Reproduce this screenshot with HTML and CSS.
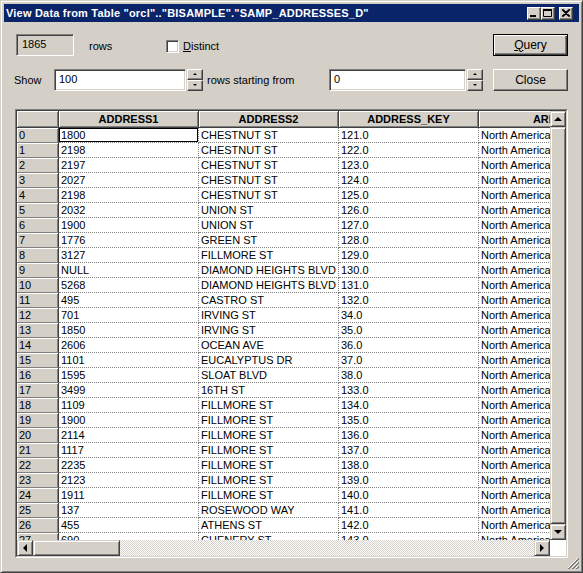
FILE: index.html
```html
<!DOCTYPE html>
<html lang="en">
<head>
    <meta charset="UTF-8">
    <title>View Data from Table</title>
    <link rel="stylesheet" href="styles.css">
</head>
<body>
<div class="window">
    <div class="titlebar">
        <span class="title">View Data from Table "orcl".."BISAMPLE"."SAMP_ADDRESSES_D"</span>
        <div class="caption">
            <span class="cap-btn"><svg width="12" height="11" viewBox="0 0 12 11"><rect x="2" y="7" width="6" height="2" fill="#000"/></svg></span>
            <span class="cap-btn"><svg width="12" height="11" viewBox="0 0 12 11"><path d="M1.5 1.5h8v7h-8z" fill="none" stroke="#000"/><rect x="1" y="1" width="9" height="2" fill="#000"/></svg></span>
            <span class="cap-btn close"><svg width="12" height="11" viewBox="0 0 12 11"><path d="M2 1.5l7 7M3 1.5l7 7M9 1.5l-7 7M10 1.5l-7 7" stroke="#000" stroke-width="1.1"/></svg></span>
        </div>
    </div>

    <div class="controls">
        <div class="ctrl-row">
            <div class="field readonly count">1865</div>
            <span class="lbl rows-lbl">rows</span>
            <label class="check"><span class="checkbox"></span><span><u>D</u>istinct</span></label>
            <button class="btn default"><u>Q</u>uery</button>
        </div>
        <div class="ctrl-row">
            <span class="lbl show-lbl">Show</span>
            <div class="field show-field">100</div>
            <div class="spin-btns"><span class="spin up"></span><span class="spin down"></span></div>
            <span class="lbl from-lbl">rows starting from</span>
            <div class="field start-field">0</div>
            <div class="spin-btns"><span class="spin up"></span><span class="spin down"></span></div>
            <button class="btn">Close</button>
        </div>
    </div>

    <div class="grid-panel">
        <div class="grid-inner">
            <div class="viewport">
                <table class="data">
                    <colgroup><col class="c-idx"><col class="c-data"><col class="c-data"><col class="c-data"><col class="c-data"></colgroup>
                    <thead>
                        <tr><th></th><th>ADDRESS1</th><th>ADDRESS2</th><th>ADDRESS_KEY</th><th>AREA</th></tr>
                    </thead>
                    <tbody>
                        <tr><th>0</th><td class="focus">1800</td><td>CHESTNUT ST</td><td>121.0</td><td>North America</td></tr>
                        <tr><th>1</th><td>2198</td><td>CHESTNUT ST</td><td>122.0</td><td>North America</td></tr>
                        <tr><th>2</th><td>2197</td><td>CHESTNUT ST</td><td>123.0</td><td>North America</td></tr>
                        <tr><th>3</th><td>2027</td><td>CHESTNUT ST</td><td>124.0</td><td>North America</td></tr>
                        <tr><th>4</th><td>2198</td><td>CHESTNUT ST</td><td>125.0</td><td>North America</td></tr>
                        <tr><th>5</th><td>2032</td><td>UNION ST</td><td>126.0</td><td>North America</td></tr>
                        <tr><th>6</th><td>1900</td><td>UNION ST</td><td>127.0</td><td>North America</td></tr>
                        <tr><th>7</th><td>1776</td><td>GREEN ST</td><td>128.0</td><td>North America</td></tr>
                        <tr><th>8</th><td>3127</td><td>FILLMORE ST</td><td>129.0</td><td>North America</td></tr>
                        <tr><th>9</th><td>NULL</td><td>DIAMOND HEIGHTS BLVD</td><td>130.0</td><td>North America</td></tr>
                        <tr><th>10</th><td>5268</td><td>DIAMOND HEIGHTS BLVD</td><td>131.0</td><td>North America</td></tr>
                        <tr><th>11</th><td>495</td><td>CASTRO ST</td><td>132.0</td><td>North America</td></tr>
                        <tr><th>12</th><td>701</td><td>IRVING ST</td><td>34.0</td><td>North America</td></tr>
                        <tr><th>13</th><td>1850</td><td>IRVING ST</td><td>35.0</td><td>North America</td></tr>
                        <tr><th>14</th><td>2606</td><td>OCEAN AVE</td><td>36.0</td><td>North America</td></tr>
                        <tr><th>15</th><td>1101</td><td>EUCALYPTUS DR</td><td>37.0</td><td>North America</td></tr>
                        <tr><th>16</th><td>1595</td><td>SLOAT BLVD</td><td>38.0</td><td>North America</td></tr>
                        <tr><th>17</th><td>3499</td><td>16TH ST</td><td>133.0</td><td>North America</td></tr>
                        <tr><th>18</th><td>1109</td><td>FILLMORE ST</td><td>134.0</td><td>North America</td></tr>
                        <tr><th>19</th><td>1900</td><td>FILLMORE ST</td><td>135.0</td><td>North America</td></tr>
                        <tr><th>20</th><td>2114</td><td>FILLMORE ST</td><td>136.0</td><td>North America</td></tr>
                        <tr><th>21</th><td>1117</td><td>FILLMORE ST</td><td>137.0</td><td>North America</td></tr>
                        <tr><th>22</th><td>2235</td><td>FILLMORE ST</td><td>138.0</td><td>North America</td></tr>
                        <tr><th>23</th><td>2123</td><td>FILLMORE ST</td><td>139.0</td><td>North America</td></tr>
                        <tr><th>24</th><td>1911</td><td>FILLMORE ST</td><td>140.0</td><td>North America</td></tr>
                        <tr><th>25</th><td>137</td><td>ROSEWOOD WAY</td><td>141.0</td><td>North America</td></tr>
                        <tr><th>26</th><td>455</td><td>ATHENS ST</td><td>142.0</td><td>North America</td></tr>
                        <tr><th>27</th><td>690</td><td>CHENERY ST</td><td>143.0</td><td>North America</td></tr>
                    </tbody>
                </table>
            </div>
            <div class="vscroll">
                <span class="sb-btn"><span class="arrow arrow-up"></span></span>
                <span class="track"><span class="thumb v-thumb"></span></span>
                <span class="sb-btn"><span class="arrow arrow-down"></span></span>
            </div>
            <div class="hscroll">
                <span class="sb-btn"><span class="arrow arrow-left"></span></span>
                <span class="track"><span class="thumb h-thumb"></span></span>
                <span class="sb-btn"><span class="arrow arrow-right"></span></span>
            </div>
            <div class="corner"></div>
        </div>
    </div>

    <svg class="grip" width="12" height="12" viewBox="0 0 12 12">
        <path d="M11 1L1 11M11 5L5 11M11 9L9 11" stroke="#fff"/>
        <path d="M12 1L1 12M12 2L2 12M12 5L5 12M12 6L6 12M12 9L9 12M12 10L10 12" stroke="#808080"/>
    </svg>
</div>
</body>
</html>
```

FILE: styles.css
```css
body{
    margin: 0;
    font-family: "Liberation Sans", Arial, sans-serif;
    font-size: 11px;
    color: #000;
}
.window{
    position: relative;
    box-sizing: border-box;
    width: 583px;
    height: 573px;
    padding: 3px;
    background-color: #d4d0c8;
    border: 1px solid;
    border-color: #d4d0c8 #404040 #404040 #d4d0c8;
    box-shadow: inset 1px 1px #fff, inset -1px -1px #808080;
}
.titlebar{
    display: flex;
    align-items: center;
    height: 18px;
    padding-left: 2px;
    background-color: #0a246a;
    color: #fff;
}
.title{
    font-weight: bold;
    font-size: 11px;
    letter-spacing: 0.2px;
    white-space: nowrap;
}
.caption{
    display: flex;
    margin-left: auto;
    padding-right: 6px;
}
.cap-btn{
    display: flex;
    align-items: center;
    justify-content: center;
    box-sizing: border-box;
    width: 14px;
    height: 13px;
    background-color: #d4d0c8;
    border: 1px solid;
    border-color: #fff #404040 #404040 #fff;
    box-shadow: inset -1px -1px #808080;
}
.cap-btn.close{
    margin-left: 4px;
}

/* top controls */
.controls{
    padding-top: 12px;
}
.ctrl-row{
    display: flex;
    align-items: center;
    height: 22px;
}
.ctrl-row + .ctrl-row{
    margin-top: 13px;
}
.field{
    box-sizing: border-box;
    height: 22px;
    padding: 0 0 2px 4px;
    display: flex;
    align-items: center;
    background-color: #fff;
    border: 1px solid;
    border-color: #808080 #fff #fff #808080;
    box-shadow: inset 1px 1px #404040, inset -1px -1px #d4d0c8;
}
.field.readonly{
    background-color: #d4d0c8;
}
.count{
    width: 58px;
    margin-left: 12px;
    padding-left: 5px;
}
.rows-lbl{
    width: 77px;
    margin-left: 15px;
    padding-top: 2px;
}
.check{
    display: flex;
    align-items: center;
    gap: 4px;
    padding-top: 2px;
}
.checkbox{
    box-sizing: border-box;
    width: 13px;
    height: 13px;
    background-color: #fff;
    border: 1px solid;
    border-color: #808080 #fff #fff #808080;
    box-shadow: inset 1px 1px #404040, inset -1px -1px #d4d0c8;
}
.show-lbl{
    width: 40px;
    margin-left: 10px;
}
.show-field{
    width: 132px;
}
.from-lbl{
    width: 122px;
    margin-left: 4px;
}
.start-field{
    width: 137px;
}
.spin-btns{
    display: flex;
    flex-direction: column;
    margin-left: 1px;
    height: 22px;
}
.spin{
    position: relative;
    box-sizing: border-box;
    width: 16px;
    height: 11px;
    border: 1px solid;
    border-color: #fff #404040 #404040 #fff;
    box-shadow: inset -1px -1px #808080;
    background-color: #d4d0c8;
}
.spin::after{
    content: '';
    position: absolute;
    left: 5px;
    top: 3px;
    border-left: 2px solid transparent;
    border-right: 2px solid transparent;
}
.spin.up::after{
    border-bottom: 2px solid #000;
}
.spin.down::after{
    border-top: 2px solid #000;
}
.btn{
    box-sizing: border-box;
    width: 75px;
    height: 22px;
    margin-left: auto;
    margin-right: 11px;
    padding: 0 0 1px;
    font: inherit;
    font-size: 12px;
    color: #000;
    background-color: #d4d0c8;
    border: 1px solid;
    border-color: #fff #404040 #404040 #fff;
    box-shadow: inset -1px -1px #808080;
}
.btn.default{
    border-color: #000;
    box-shadow: inset 1px 1px #fff, inset -1px -1px #404040, inset -2px -2px #808080;
}

/* data grid */
.grid-panel{
    box-sizing: border-box;
    width: 553px;
    height: 449px;
    margin: 18px 0 0 11px;
    border: 1px solid;
    border-color: #808080 #fff #fff #808080;
}
.grid-inner{
    display: grid;
    grid-template-columns: 533px 16px;
    grid-template-rows: 429px 16px;
    border: 1px solid;
    border-color: #404040 #d4d0c8 #d4d0c8 #404040;
}
.viewport{
    overflow: hidden;
    background-color: #fff;
}
.data{
    table-layout: fixed;
    width: 602px;
    border-collapse: separate;
    border-spacing: 0;
}
.c-idx{
    width: 42px;
}
.c-data{
    width: 140px;
}
.data th,
.data td{
    box-sizing: border-box;
    padding: 1px 0 0 2px;
    height: 15px;
    line-height: 13px;
    white-space: nowrap;
    overflow: hidden;
    text-align: left;
    font-weight: normal;
}
.data td{
    border-right: 1px dotted #808080;
    border-bottom: 1px dotted #808080;
}
.data td.focus{
    box-shadow: inset 0 0 0 1px #000;
}
.data tbody th{
    background-color: #d4d0c8;
    border-right: 1px solid #404040;
    border-bottom: 1px solid #808080;
    box-shadow: inset 1px 1px #fff, inset -1px 0 #808080;
}
.data thead th{
    height: 17px;
    padding: 1px 0 0;
    line-height: 15px;
    text-align: center;
    font-weight: bold;
    background-color: #d4d0c8;
    border-right: 1px solid #404040;
    border-bottom: 1px solid #404040;
    box-shadow: inset 1px 1px #fff, inset -1px -1px #808080;
}

/* scrollbars */
.vscroll,
.hscroll{
    display: flex;
}
.vscroll{
    flex-direction: column;
}
.track{
    flex: 1;
    display: flex;
    background: repeating-conic-gradient(#d4d0c8 0 25%, #fff 0 50%) 0 0/2px 2px;
}
.vscroll .track{
    flex-direction: column;
}
.sb-btn,
.thumb{
    box-sizing: border-box;
    display: flex;
    align-items: center;
    justify-content: center;
    flex: none;
    background-color: #d4d0c8;
    border: 1px solid;
    border-color: #d4d0c8 #404040 #404040 #d4d0c8;
    box-shadow: inset 1px 1px #fff, inset -1px -1px #808080;
}
.sb-btn{
    width: 16px;
    height: 16px;
}
.v-thumb{
    flex: 1;
}
.h-thumb{
    width: 87px;
}
.arrow{
    width: 0;
    height: 0;
}
.arrow-up{
    border-left: 4px solid transparent;
    border-right: 4px solid transparent;
    border-bottom: 4px solid #000;
}
.arrow-down{
    border-left: 4px solid transparent;
    border-right: 4px solid transparent;
    border-top: 4px solid #000;
}
.arrow-left{
    border-top: 4px solid transparent;
    border-bottom: 4px solid transparent;
    border-right: 4px solid #000;
}
.arrow-right{
    border-top: 4px solid transparent;
    border-bottom: 4px solid transparent;
    border-left: 4px solid #000;
}
.corner{
    background-color: #fff;
}
.grip{
    position: absolute;
    right: 3px;
    bottom: 3px;
}
```
